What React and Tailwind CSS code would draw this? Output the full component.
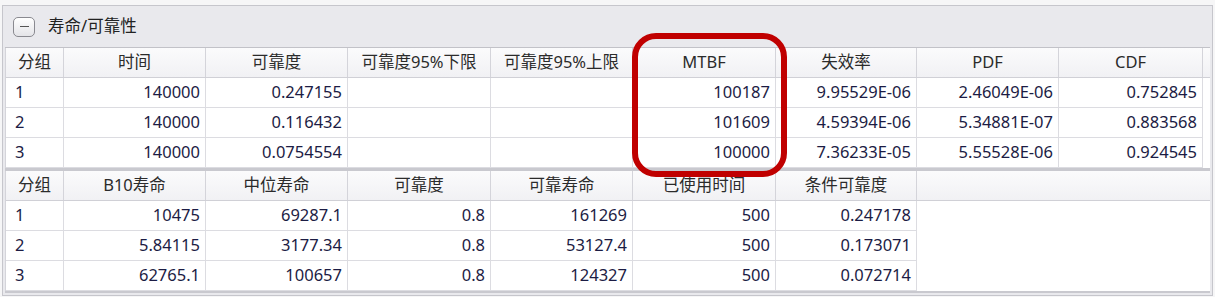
import React from 'react';

const font = { fontFamily: '"Noto Sans", "Noto Sans CJK SC", sans-serif' };

const topCols = [58, 142, 142, 143, 142, 143, 141, 142, 144];
const topHead = ['分组', '时间', '可靠度', '可靠度95%下限', '可靠度95%上限', 'MTBF', '失效率', 'PDF', 'CDF'];
const topRows = [
  ['1', '140000', '0.247155', '', '', '100187', '9.95529E-06', '2.46049E-06', '0.752845'],
  ['2', '140000', '0.116432', '', '', '101609', '4.59394E-06', '5.34881E-07', '0.883568'],
  ['3', '140000', '0.0754554', '', '', '100000', '7.36233E-05', '5.55528E-06', '0.924545'],
];

const bottomCols = [58, 142, 142, 143, 142, 143, 141];
const bottomHead = ['分组', 'B10寿命', '中位寿命', '可靠度', '可靠寿命', '已使用时间', '条件可靠度'];
const bottomRows = [
  ['1', '10475', '69287.1', '0.8', '161269', '500', '0.247178'],
  ['2', '5.84115', '3177.34', '0.8', '53127.4', '500', '0.173071'],
  ['3', '62765.1', '100657', '0.8', '124327', '500', '0.072714'],
];

function Grid({ cols, head, rows }) {
  return (
    <div className="border-l border-[#d4d4da]">
      <div className="flex h-[30px] border-b border-[#d0d0d6] bg-gradient-to-b from-[#fbfbfc] to-[#f1f1f4]">
        {head.map((h, i) => (
          <div
            key={i}
            style={{ width: cols[i] }}
            className="shrink-0 flex items-center justify-center border-r border-[#d4d4da] text-[16.5px] text-[#2b2b2b] whitespace-nowrap"
          >
            {h}
          </div>
        ))}
        <div className="flex-1" />
      </div>
      {rows.map((r, ri) => (
        <div key={ri} className="flex h-[30px]">
          {r.map((c, i) => (
            <div
              key={i}
              style={{ width: cols[i] }}
              className={`shrink-0 flex items-center border-r border-b border-[#dcdce1] bg-white text-[16.5px] text-[#1c1c44] whitespace-nowrap ${
                i === 0 ? 'justify-start pl-[9px]' : 'justify-end pr-[5px]'
              }`}
            >
              {c}
            </div>
          ))}
          <div className="flex-1 bg-white" />
        </div>
      ))}
    </div>
  );
}

export default function App() {
  return (
    <div className="relative w-[1215px] h-[297px] bg-[#f6f6f7] pt-[5px] pl-[2px] overflow-hidden" style={font}>
      <div className="w-[1211px] border border-[#c6c6cc] bg-[#e9e9ed]">
        <div className="h-[41px] flex items-center pl-[10px] gap-[13px]">
          <div className="w-[22px] h-[20px] rounded-[5px] border border-[#8a8a90] bg-gradient-to-b from-white to-[#e4e4e8] flex items-center justify-center">
            <div className="w-[9px] h-[1.5px] bg-[#555]" />
          </div>
          <span className="text-[16.5px] text-[#222]">寿命/可靠性</span>
        </div>
        <div className="ml-[2px] mr-[2px] border-t border-[#c2c2c8]">
          <Grid cols={topCols} head={topHead} rows={topRows} />
          <div className="h-[3px] bg-[#c9c9cf]" />
          <Grid cols={bottomCols} head={bottomHead} rows={bottomRows} />
          <div className="h-[2px] bg-[#c9c9cf]" />
        </div>
        <div className="h-[2px]" />
      </div>
      <div className="absolute left-[632px] top-[33px] w-[155px] h-[144px] border-[6px] border-[#c00000] rounded-[24px]" />
    </div>
  );
}
